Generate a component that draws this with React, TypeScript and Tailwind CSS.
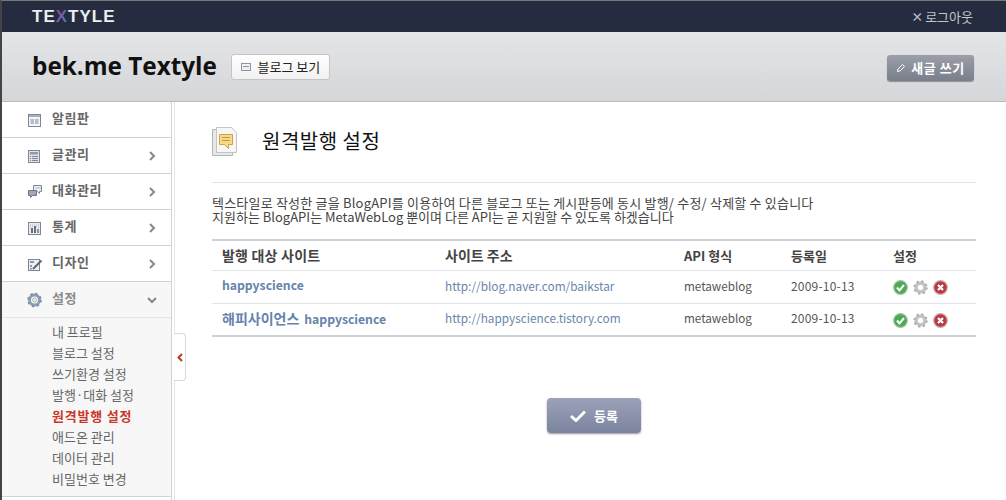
import React from "react";

const KR = "font-['Noto_Sans_CJK_KR','Liberation_Sans',sans-serif]";

const Chevron = ({ down }: { down?: boolean }) => (
  <svg width="10" height="10" viewBox="0 0 10 10" className="block">
    <path d={down ? "M1 3 L5 7 L9 3" : "M3 1 L7 5 L3 9"} fill="none" stroke="#888" strokeWidth="2" />
  </svg>
);

const icons: Record<string, React.ReactNode> = {
  board: (
    <>
      <rect x="1.5" y="2.5" width="12" height="12" fill="#f4f5f7" stroke="#7f8796" />
      <rect x="2" y="3" width="11" height="2" fill="#a9afbb" />
      <rect x="3.5" y="7" width="3.5" height="5" fill="#b6bcc8" />
      <rect x="8" y="7" width="3.5" height="5" fill="#b6bcc8" />
    </>
  ),
  post: (
    <>
      <rect x="1.5" y="2.5" width="11" height="12" fill="#dfe2e8" stroke="#7f8796" />
      <rect x="3" y="4" width="8" height="2.5" fill="#9199a8" />
      <path d="M3 8.5h1M5 8.5h6M3 10.5h1M5 10.5h6M3 12.5h1M5 12.5h6" stroke="#7f8796" />
    </>
  ),
  talk: (
    <>
      <path d="M6.5 1.5h8v6h-2v2l-2-2h-4z" fill="#eceef2" stroke="#7f8796" />
      <path d="M1.5 6.5h8v5h-4l-2 2v-2h-2z" fill="#a0a7b5" stroke="#6d7584" />
      <path d="M8.5 4h1M10.5 4h1M12.5 4h1" stroke="#7f8796" />
    </>
  ),
  stat: (
    <>
      <rect x="1.5" y="2.5" width="12" height="12" fill="#e8eaee" stroke="#7f8796" />
      <path d="M3 5h9M3 7h9" stroke="#b4bac6" strokeDasharray="1 1" />
      <rect x="4" y="8" width="2" height="5" fill="#68707f" />
      <rect x="7" y="6" width="2" height="7" fill="#68707f" />
      <rect x="10" y="9" width="2" height="4" fill="#8a92a1" />
    </>
  ),
  design: (
    <>
      <rect x="1.5" y="3.5" width="11" height="11" fill="#eef0f3" stroke="#7f8796" />
      <rect x="3" y="5" width="4" height="2" fill="#9199a8" />
      <rect x="3" y="9" width="2" height="2" fill="#9199a8" />
      <rect x="3" y="12" width="2" height="1.5" fill="#9199a8" />
      <path d="M6 13 L14.5 4.5" stroke="#5e6675" strokeWidth="2" />
    </>
  ),
  gear: (
    <>
      <circle cx="7.5" cy="8" r="5" fill="none" stroke="#8e9db2" strokeWidth="3" />
      <circle cx="7.5" cy="8" r="6.3" fill="none" stroke="#7f8fa5" strokeWidth="2" strokeDasharray="2.4 2.55" />
      <circle cx="7.5" cy="8" r="2" fill="#eef0f3" stroke="#7d8796" strokeWidth=".6" />
    </>
  ),
};

const MenuItem = ({
  icon,
  label,
  active,
}: {
  icon: string;
  label: string;
  active?: boolean;
}) => (
  <div
    className={`flex h-9 items-center border-b border-[#d2d2d2] pl-[25px] pr-[14px] ${
      active ? "bg-[#f7f7f7] border-b-[#e4e4e4]" : "bg-white"
    }`}
  >
    <svg width="16" height="16" viewBox="0 0 16 16" className="block shrink-0">
      {icons[icon]}
    </svg>
    <span
      className={`ml-[9px] flex-1 -translate-y-[2px] text-[13px] font-bold tracking-[0.5px] ${
        active ? "text-[#8a8a8a]" : "text-[#666]"
      }`}
    >
      {label}
    </span>
    {icon !== "board" && <Chevron down={active} />}
  </div>
);

const subItems = [
  "내 프로필",
  "블로그 설정",
  "쓰기환경 설정",
  "발행·대화 설정",
  "원격발행 설정",
  "애드온 관리",
  "데이터 관리",
  "비밀번호 변경",
];

const StatusIcons = () => (
  <div className="flex items-center gap-[5px]">
    <svg width="15" height="15" viewBox="0 0 15 15">
      <circle cx="7.5" cy="7.5" r="6.8" fill="#4aab50" stroke="#a9bcaa" strokeWidth="1.2" />
      <path d="M4 7.5 L6.5 10.5 L11 5" fill="none" stroke="#fff" strokeWidth="2" />
    </svg>
    <svg width="15" height="15" viewBox="0 0 15 15">
      <circle cx="7.5" cy="7.5" r="4.4" fill="none" stroke="#c2c2c2" strokeWidth="3.4" />
      <circle cx="7.5" cy="7.5" r="6.2" fill="none" stroke="#b0b0b0" strokeWidth="2" strokeDasharray="2.3 2.57" />
    </svg>
    <svg width="15" height="15" viewBox="0 0 15 15">
      <circle cx="7.5" cy="7.5" r="6.8" fill="#b93a40" stroke="#c9aeae" strokeWidth="1.2" />
      <path d="M5 5 L10 10 M10 5 L5 10" stroke="#fff" strokeWidth="2.2" />
    </svg>
  </div>
);

const rows = [
  { ko: "", url: "http://blog.naver.com/baikstar" },
  { ko: "해피사이언스", url: "http://happyscience.tistory.com" },
];

export default function App() {
  return (
    <div className={`${KR} h-[500px] w-[1006px] overflow-hidden border-l-2 border-t border-l-[#444] border-t-[#777] bg-white`}>
      <header className="flex h-[31px] items-center justify-between bg-[#262c40] pl-[30px] pr-[33px]">
        <span className="font-['Liberation_Sans',sans-serif] text-[17px] font-bold tracking-[1px] text-[#eceef0]">
          TE
          <span className="bg-gradient-to-br from-[#93409f] to-[#3f7ab5] bg-clip-text text-transparent">X</span>
          TYLE
        </span>
        <span className="flex items-center gap-[2px] text-[13px] text-[#c3c6cd]">
          <span className="text-[12px] font-bold text-[#bbc]">×</span>로그아웃
        </span>
      </header>

      <div className="flex h-[70px] items-center justify-between border-b border-[#bbb] bg-gradient-to-b from-[#e4e5e7] to-[#d5d6d9] pl-[30px] pr-[32px]">
        <div className="flex items-center gap-[14px]">
          <h1 className="font-['Open_Sans',sans-serif] text-[24.3px] leading-none font-bold text-[#111]">
            bek.me Textyle
          </h1>
          <button className="flex h-[26px] w-[99px] items-center justify-center gap-[7px] rounded-[3px] border border-[#c4c4c4] bg-gradient-to-b from-white to-[#f1f1f1] text-[13px] text-[#222]">
            <svg width="10" height="10" viewBox="0 0 10 10">
              <rect x=".5" y="1.5" width="9" height="7" fill="#eef0f4" stroke="#8d95a8" />
              <path d="M2 4.5h6" stroke="#8d95a8" />
            </svg>
            블로그 보기
          </button>
        </div>
        <button className="mt-[2px] flex h-[26px] w-[87px] items-center justify-center gap-[5px] rounded-[3px] bg-gradient-to-b from-[#9b9fa9] to-[#7a7e8a] text-[13px] font-bold tracking-[0.5px] text-white shadow-[0_1px_1px_rgba(0,0,0,0.35)]">
          <svg width="10" height="10" viewBox="0 0 10 10">
            <path d="M1.5 8.5 L2 6 L6.5 1.5 L8.5 3.5 L4 8 Z" fill="none" stroke="#fff" />
          </svg>
          새글 쓰기
        </button>
      </div>

      <div className="relative flex h-[398px]">
        <aside className="w-[170px] shrink-0 border-r border-[#d2d2d2]">
          <MenuItem icon="board" label="알림판" />
          <MenuItem icon="post" label="글관리" />
          <MenuItem icon="talk" label="대화관리" />
          <MenuItem icon="stat" label="통계" />
          <MenuItem icon="design" label="디자인" />
          <MenuItem icon="gear" label="설정" active />
          <ul className="h-[179px] border-b border-[#d2d2d2] bg-[#f7f7f7] pt-[3px] pl-[50px]">
            {subItems.map((s) => (
              <li
                key={s}
                className={`h-[21px] text-[13px] leading-[21px] ${
                  s === "원격발행 설정" ? "font-bold tracking-[0.8px] text-[#c8392b]" : "text-[#666]"
                }`}
              >
                {s}
              </li>
            ))}
          </ul>
        </aside>

        <div className="absolute top-[231px] left-[172px] flex h-[48px] w-[12px] items-center justify-center rounded-r-[4px] border border-l-0 border-[#d8d8d8] bg-white">
          <svg width="6" height="9" viewBox="0 0 6 9">
            <path d="M5 1 L1.5 4.5 L5 8" fill="none" stroke="#c0391f" strokeWidth="2" />
          </svg>
        </div>

        <main className="ml-[2px] flex-1 border-l border-[#e6e6e6] pl-[37px] pr-[30px]">
          <div className="flex h-[81px] items-start border-b border-[#e2e2e2] pt-[25px]">
            <svg width="26" height="29" viewBox="0 0 26 29" className="block">
              <path d="M.5 2.5h20v26H.5z" fill="#e8e8e8" stroke="#b5b5b5" />
              <path d="M4.5.5h15l5 5v20h-20z" fill="#f6f6f6" stroke="#c4c4c4" />
              <path d="M7.5 7.5h13v10h-4v4l-4-4h-5z" fill="#f6d98a" stroke="#cfa340" />
              <path d="M10 10.5h8M10 13.5h8" stroke="#c59a3c" />
            </svg>
            <h2 className="ml-[24px] text-[20px] leading-[28px] tracking-[0.5px] text-[#111]">원격발행 설정</h2>
          </div>

          <div className="h-[56px] pt-[13px] text-[13px] leading-[14px] text-[#444]">
            <p className="tracking-[0.2px]">텍스타일로 작성한 글을 BlogAPI를 이용하여 다른 블로그 또는 게시판등에 동시 발행/ 수정/ 삭제할 수 있습니다</p>
            <p>지원하는 BlogAPI는 MetaWebLog 뿐이며 다른 API는 곧 지원할 수 있도록 하겠습니다</p>
          </div>

          <table className="w-[764px] table-fixed border-y-[2px] border-[#ccd2d8] text-xs">
            <colgroup>
              <col className="w-[223px]" />
              <col className="w-[239px]" />
              <col className="w-[107px]" />
              <col className="w-[102px]" />
              <col />
            </colgroup>
            <thead>
              <tr className="h-[30px] border-b border-[#e0e3e7] text-left text-[13px] font-bold text-[#444]">
                <th className="pl-[10px] text-[14px] tracking-[0.2px]">발행 대상 사이트</th>
                <th className="pl-[10px] text-[14px]">사이트 주소</th>
                <th className="pl-[10px]">API 형식</th>
                <th className="pl-[10px]">등록일</th>
                <th className="pl-[10px]">설정</th>
              </tr>
            </thead>
            <tbody>
              {rows.map(({ ko, url }, i) => (
                <tr key={url} className={`h-[33px] ${i === 0 ? "border-b border-[#e0e3e7]" : ""}`}>
                  <td className="pb-[2px] pl-[10px] text-[12.2px] font-bold whitespace-nowrap text-[#6583ad]">
                    {ko && <span className="mr-[5px] text-[14px]">{ko}</span>}
                    happyscience
                  </td>
                  <td className="pb-[2px] pl-[10px] text-[11.8px] text-[#6a86ab]">{url}</td>
                  <td className="pb-[2px] pl-[10px] text-[11.7px] text-[#555]">metaweblog</td>
                  <td className="pb-[2px] pl-[10px] tracking-[0.2px] text-[#555]">2009-10-13</td>
                  <td className="pt-[2px] pl-[10px]">
                    <StatusIcons />
                  </td>
                </tr>
              ))}
            </tbody>
          </table>

          <div className="flex justify-center pt-[61px]">
            <button className="flex h-[35px] w-[94px] items-center justify-center gap-[8px] rounded-[4px] bg-gradient-to-b from-[#9ba2b9] to-[#7c839e] text-[13px] font-bold text-white shadow-[0_1px_2px_rgba(0,0,0,0.4)]">
              <svg width="16" height="12" viewBox="0 0 16 12">
                <path d="M1 6 L6 10.5 L15 1.5" fill="none" stroke="#fff" strokeWidth="3" />
              </svg>
              등록
            </button>
          </div>
        </main>
      </div>
    </div>
  );
}
